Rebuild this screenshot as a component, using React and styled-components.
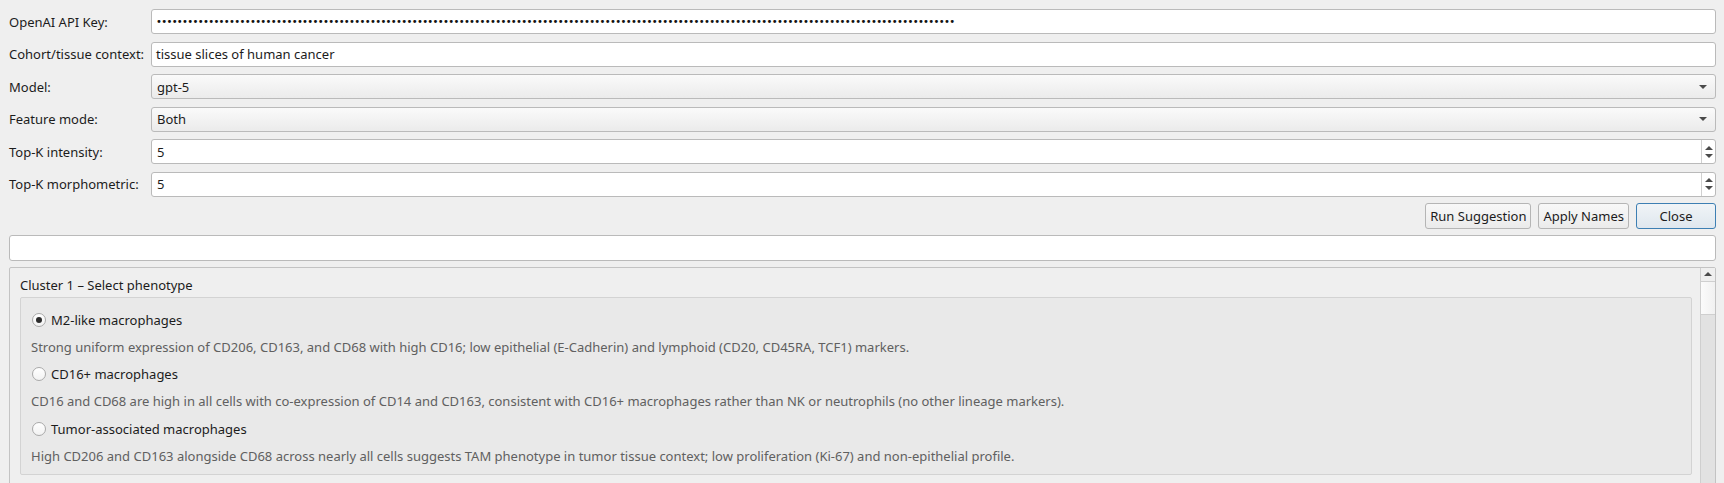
import React from "react";
import styled, { createGlobalStyle, css } from "styled-components";

const Global = createGlobalStyle`
  html, body {
    margin: 0;
    padding: 0;
    background: #efefef;
    overflow: hidden;
  }
  body {
    font-family: "Noto Sans", "DejaVu Sans", sans-serif;
    font-size: 13px;
    color: #1c1c1c;
  }
`;

const Page = styled.div`
  display: flex;
  flex-direction: column;
  padding: 9px 8px 0 9px;
`;

const Form = styled.div`
  display: grid;
  grid-template-columns: 136px 1fr;
  column-gap: 6px;
  row-gap: 7.5px;
  align-items: center;
`;

const Label = styled.div`
  white-space: nowrap;
  line-height: 18px;
`;

const fieldBase = css`
  box-sizing: border-box;
  height: 25px;
  border: 1px solid #bababa;
  border-radius: 3px;
  display: flex;
  align-items: center;
  white-space: nowrap;
  overflow: hidden;
`;

const LineEdit = styled.div`
  ${fieldBase};
  background: #fff;
  padding-left: 4px;
`;

const Password = styled.span`
  font-family: "DejaVu Sans", sans-serif;
  font-size: 10px;
  letter-spacing: ${(p) => p.$spacing}px;
  color: #111;
`;

const Combo = styled.div`
  ${fieldBase};
  background: linear-gradient(#fafafa, #ebebeb);
  padding: 0 8px 0 5px;
  justify-content: space-between;
`;

const DownArrow = styled.span`
  width: 0;
  height: 0;
  border-left: 4px solid transparent;
  border-right: 4px solid transparent;
  border-top: 4px solid #4a4a4a;
`;

const UpArrow = styled.span`
  width: 0;
  height: 0;
  border-left: 4px solid transparent;
  border-right: 4px solid transparent;
  border-bottom: 4px solid #4a4a4a;
`;

const Spin = styled.div`
  ${fieldBase};
  background: #fff;
  padding-left: 5px;
  justify-content: space-between;
`;

const SpinButtons = styled.div`
  align-self: stretch;
  width: 13px;
  border-left: 1px solid #d0d0d0;
  display: flex;
  flex-direction: column;
  justify-content: center;
  align-items: center;
  gap: 4px;
`;

const ButtonRow = styled.div`
  display: flex;
  justify-content: flex-end;
  gap: 7px;
  margin-top: 6px;
`;

const Button = styled.div`
  box-sizing: border-box;
  height: 26px;
  min-width: 80px;
  padding: 0 4px;
  display: flex;
  align-items: center;
  justify-content: center;
  border-radius: 3px;
  border: 1px solid ${(p) => (p.$default ? "#3d7fb3" : "#b5b5b5")};
  background: ${(p) =>
    p.$default
      ? "linear-gradient(#f0f4f7, #dfe7ee)"
      : "linear-gradient(#f8f8f8, #ebebeb)"};
  white-space: nowrap;
`;

const StatusField = styled.div`
  ${fieldBase};
  height: 26px;
  background: #fff;
  margin-top: 6px;
`;

const ScrollArea = styled.div`
  box-sizing: border-box;
  display: flex;
  height: 260px;
  margin-top: 6px;
  border: 1px solid #c3c3c3;
  border-radius: 2px;
  background: #efefef;
`;

const ScrollContent = styled.div`
  flex: 1;
  padding: 0 8px 0 10px;
`;

const GroupTitle = styled.div`
  line-height: 18px;
  padding: 8px 0 0 0;
  margin-bottom: 3px;
`;

const GroupFrame = styled.div`
  border: 1px solid #d3d3d3;
  border-radius: 2px;
  background: #e9e9e9;
  padding: 12px 10px 8px 10px;
  display: flex;
  flex-direction: column;
  gap: 7.3px;
`;

const RadioRow = styled.div`
  display: flex;
  align-items: center;
  gap: 5px;
  height: 20px;
  padding-left: 1px;
  white-space: nowrap;
`;

const Radio = styled.span`
  box-sizing: border-box;
  width: 14px;
  height: 14px;
  border-radius: 50%;
  border: 1px solid #a9a9a9;
  background: linear-gradient(#ffffff, #f2f2f2);
  display: flex;
  align-items: center;
  justify-content: center;
  &::after {
    content: "";
    display: ${(p) => (p.$checked ? "block" : "none")};
    width: 6px;
    height: 6px;
    border-radius: 50%;
    background: #2c2c2c;
  }
`;

const Desc = styled.div`
  height: 20px;
  line-height: 20px;
  color: #606060;
  white-space: nowrap;
`;

const ScrollBar = styled.div`
  width: 14px;
  border-left: 1px solid #cfcfcf;
  display: flex;
  flex-direction: column;
  background: #e2e2e2;
`;

const ScrollButton = styled.div`
  height: 13px;
  background: #efefef;
  border-bottom: 1px solid #cfcfcf;
  display: flex;
  align-items: center;
  justify-content: center;
`;

const ScrollHandle = styled.div`
  height: 32px;
  background: linear-gradient(90deg, #fbfbfb, #f1f1f1);
  border-bottom: 1px solid #cfcfcf;
`;

const options = [
  {
    name: "M2-like macrophages",
    desc: "Strong uniform expression of CD206, CD163, and CD68 with high CD16; low epithelial (E-Cadherin) and lymphoid (CD20, CD45RA, TCF1) markers.",
    checked: true,
  },
  {
    name: "CD16+ macrophages",
    desc: "CD16 and CD68 are high in all cells with co-expression of CD14 and CD163, consistent with CD16+ macrophages rather than NK or neutrophils (no other lineage markers).",
  },
  {
    name: "Tumor-associated macrophages",
    desc: "High CD206 and CD163 alongside CD68 across nearly all cells suggests TAM phenotype in tumor tissue context; low proliferation (Ki-67) and non-epithelial profile.",
  },
];

const SpinBox = ({ value }) => (
  <Spin>
    <span>{value}</span>
    <SpinButtons>
      <UpArrow />
      <DownArrow />
    </SpinButtons>
  </Spin>
);

const ComboBox = ({ value }) => (
  <Combo>
    <span>{value}</span>
    <DownArrow />
  </Combo>
);

export default function App() {
  const dots = "\u2022".repeat(153);
  return (
    <>
      <Global />
      <Page>
        <Form>
          <Label>OpenAI API Key:</Label>
          <LineEdit>
            <Password $spacing={-0.68}>{dots}</Password>
          </LineEdit>
          <Label>Cohort/tissue context:</Label>
          <LineEdit>tissue slices of human cancer</LineEdit>
          <Label>Model:</Label>
          <ComboBox value="gpt-5" />
          <Label>Feature mode:</Label>
          <ComboBox value="Both" />
          <Label>Top-K intensity:</Label>
          <SpinBox value="5" />
          <Label>Top-K morphometric:</Label>
          <SpinBox value="5" />
        </Form>
        <ButtonRow>
          <Button>Run Suggestion</Button>
          <Button>Apply Names</Button>
          <Button $default>Close</Button>
        </ButtonRow>
        <StatusField />
        <ScrollArea>
          <ScrollContent>
            <GroupTitle>Cluster 1 – Select phenotype</GroupTitle>
            <GroupFrame>
              {options.map((o) => (
                <React.Fragment key={o.name}>
                  <RadioRow>
                    <Radio $checked={o.checked} />
                    {o.name}
                  </RadioRow>
                  <Desc>{o.desc}</Desc>
                </React.Fragment>
              ))}
            </GroupFrame>
          </ScrollContent>
          <ScrollBar>
            <ScrollButton>
              <UpArrow />
            </ScrollButton>
            <ScrollHandle />
          </ScrollBar>
        </ScrollArea>
      </Page>
    </>
  );
}
